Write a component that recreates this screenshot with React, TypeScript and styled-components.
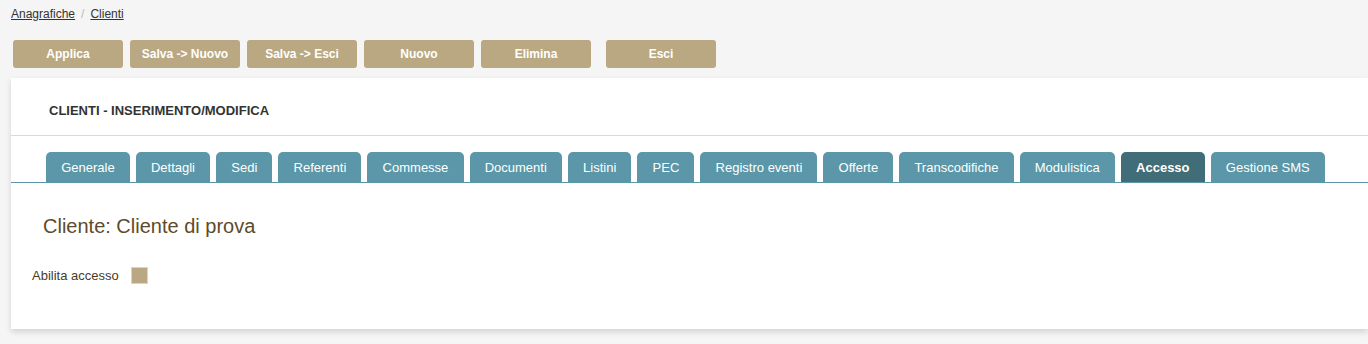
import React from "react";
import styled, { createGlobalStyle } from "styled-components";

const GlobalStyle = createGlobalStyle`
  body {
    margin: 0;
    background: #f5f5f5;
    font-family: "Liberation Sans", Arial, sans-serif;
    color: #333;
  }
`;

const Page = styled.div`
  width: 1368px;
  height: 344px;
  overflow: hidden;
`;

const Breadcrumb = styled.nav`
  display: flex;
  align-items: center;
  gap: 6px;
  padding: 6px 0 0 11px;
  height: 16px;
  font-size: 12px;
`;

const Crumb = styled.a`
  color: #333;
  text-decoration: underline;
`;

const Sep = styled.span`
  color: #bbb;
`;

const Toolbar = styled.div`
  display: flex;
  gap: 7px;
  padding: 18px 0 0 13px;
  height: 28px;
`;

const ActionButton = styled.button<{ $spaced?: boolean }>`
  width: 110px;
  height: 28px;
  margin-left: ${(p) => (p.$spaced ? "8px" : "0")};
  border: none;
  border-radius: 3px;
  background: #baa882;
  color: #fff;
  font-family: "Liberation Sans", Arial, sans-serif;
  font-size: 12px;
  font-weight: bold;
  cursor: pointer;
`;

const Panel = styled.section`
  margin: 10px 0 0 11px;
  height: 251px;
  background: #fff;
  box-shadow: 0 3px 6px rgba(0, 0, 0, 0.14);
`;

const PanelHeader = styled.div`
  display: flex;
  align-items: center;
  height: 49px;
  padding: 8px 0 0 38px;
  border-bottom: 1px solid #ddd8d2;
  font-size: 13px;
  font-weight: bold;
  color: #333;
`;

const TabBar = styled.div`
  display: flex;
  gap: 6px;
  padding: 16px 0 0 35px;
  border-bottom: 1px solid #5b97a8;
`;

const Tab = styled.div<{ $active?: boolean }>`
  height: 28px;
  line-height: 28px;
  padding: 2px 15.15px 0;
  border-radius: 5px 5px 0 0;
  background: ${(p) => (p.$active ? "#406d78" : "#5b97a8")};
  color: #fff;
  font-size: 13px;
  font-weight: ${(p) => (p.$active ? "bold" : "normal")};
  white-space: nowrap;
`;

const Content = styled.div`
  padding: 31px 0 0 21px;
`;

const Title = styled.h2`
  margin: 0 0 0 11px;
  font-size: 20px;
  font-weight: normal;
  line-height: 24px;
  color: #5e4a2c;
`;

const FieldRow = styled.label`
  display: flex;
  align-items: center;
  gap: 12px;
  margin-top: 29px;
  font-size: 13px;
  color: #4a3b26;
`;

const CheckBox = styled.span`
  width: 15px;
  height: 15px;
  background: #baa882;
  border: 1px solid #ddd4c4;
`;

const buttons = ["Applica", "Salva -> Nuovo", "Salva -> Esci", "Nuovo", "Elimina"];
const tabs = [
  "Generale",
  "Dettagli",
  "Sedi",
  "Referenti",
  "Commesse",
  "Documenti",
  "Listini",
  "PEC",
  "Registro eventi",
  "Offerte",
  "Transcodifiche",
  "Modulistica",
  "Accesso",
  "Gestione SMS",
];

export default function App() {
  return (
    <Page>
      <GlobalStyle />
      <Breadcrumb>
        <Crumb>Anagrafiche</Crumb>
        <Sep>/</Sep>
        <Crumb>Clienti</Crumb>
      </Breadcrumb>
      <Toolbar>
        {buttons.map((b) => (
          <ActionButton key={b}>{b}</ActionButton>
        ))}
        <ActionButton $spaced>Esci</ActionButton>
      </Toolbar>
      <Panel>
        <PanelHeader>CLIENTI - INSERIMENTO/MODIFICA</PanelHeader>
        <TabBar>
          {tabs.map((t) => (
            <Tab key={t} $active={t === "Accesso"}>
              {t}
            </Tab>
          ))}
        </TabBar>
        <Content>
          <Title>Cliente: Cliente di prova</Title>
          <FieldRow>
            Abilita accesso
            <CheckBox />
          </FieldRow>
        </Content>
      </Panel>
    </Page>
  );
}
